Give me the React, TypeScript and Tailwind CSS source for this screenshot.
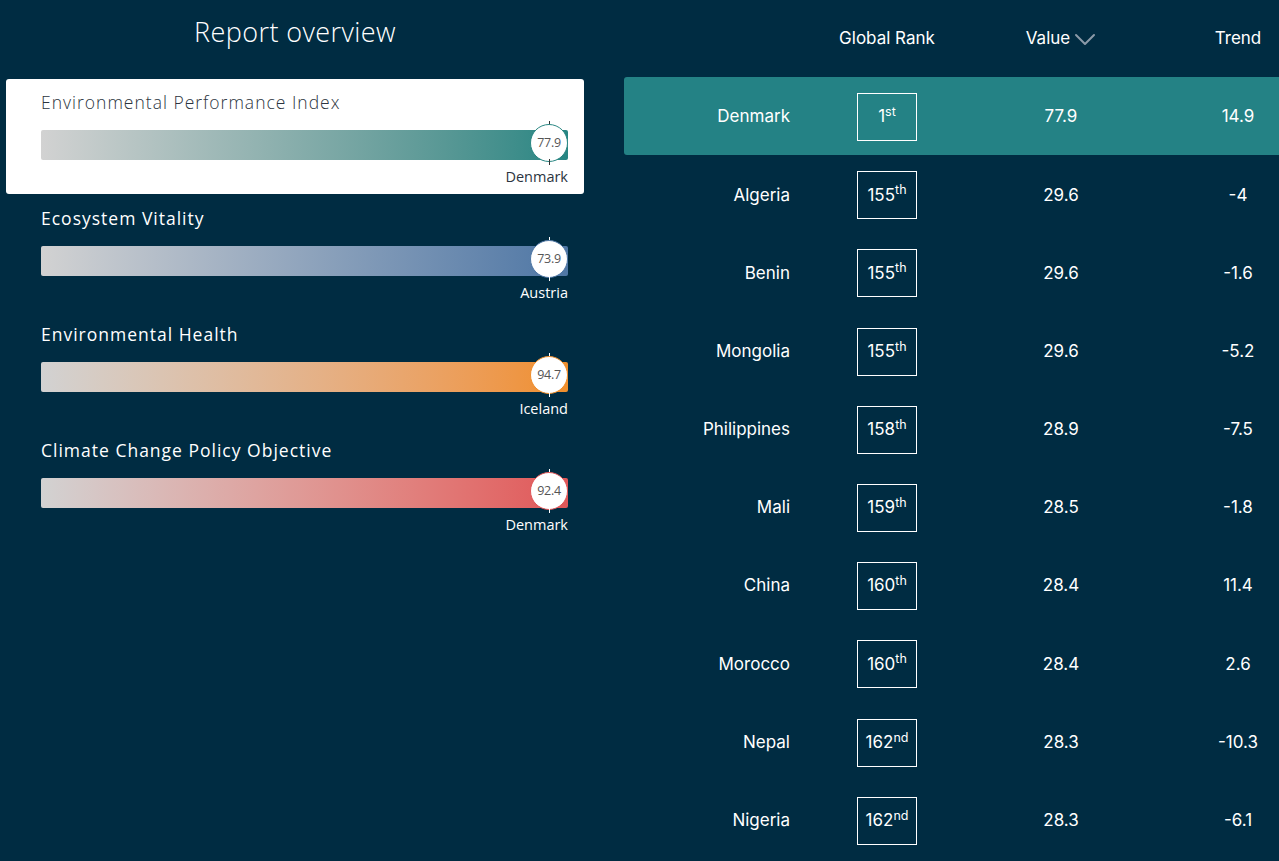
import React from 'react';

type Metric = {
  label: string;
  value: string;
  country: string;
  gradient: string;
  ring: string;
};

const metrics: Metric[] = [
  {
    label: 'Environmental Performance Index',
    value: '77.9',
    country: 'Denmark',
    gradient: 'bg-gradient-to-r from-[#d2d2d2] to-[#268683]',
    ring: 'border-[#2a8783]',
  },
  {
    label: 'Ecosystem Vitality',
    value: '73.9',
    country: 'Austria',
    gradient: 'bg-gradient-to-r from-[#d2d2d2] to-[#4f77a5]',
    ring: 'border-[#4f77a5]',
  },
  {
    label: 'Environmental Health',
    value: '94.7',
    country: 'Iceland',
    gradient: 'bg-gradient-to-r from-[#d2d2d2] to-[#f08f2c]',
    ring: 'border-[#f08f2c]',
  },
  {
    label: 'Climate Change Policy Objective',
    value: '92.4',
    country: 'Denmark',
    gradient: 'bg-gradient-to-r from-[#d2d2d2] to-[#e05759]',
    ring: 'border-[#e05759]',
  },
];

const rows = [
  { country: 'Denmark', rank: '1', suffix: 'st', value: '77.9', trend: '14.9' },
  { country: 'Algeria', rank: '155', suffix: 'th', value: '29.6', trend: '-4' },
  { country: 'Benin', rank: '155', suffix: 'th', value: '29.6', trend: '-1.6' },
  { country: 'Mongolia', rank: '155', suffix: 'th', value: '29.6', trend: '-5.2' },
  { country: 'Philippines', rank: '158', suffix: 'th', value: '28.9', trend: '-7.5' },
  { country: 'Mali', rank: '159', suffix: 'th', value: '28.5', trend: '-1.8' },
  { country: 'China', rank: '160', suffix: 'th', value: '28.4', trend: '11.4' },
  { country: 'Morocco', rank: '160', suffix: 'th', value: '28.4', trend: '2.6' },
  { country: 'Nepal', rank: '162', suffix: 'nd', value: '28.3', trend: '-10.3' },
  { country: 'Nigeria', rank: '162', suffix: 'nd', value: '28.3', trend: '-6.1' },
];

const MetricBlock: React.FC<{ m: Metric; active: boolean }> = ({ m, active }) => {
  return (
    <div
      className={`pt-[11px] pl-[35px] pr-[16px] ${
        active ? 'bg-white rounded-[3px] h-[115px] mb-[1px]' : 'h-[116px]'
      }`}
    >
      <p
        className={`text-[17.5px] leading-[24px] tracking-[1px] ${
          active ? 'text-[#2b3440] font-light' : 'text-white'
        }`}
      >
        {m.label}
      </p>
      <div className="relative mt-[16px] h-[30px]">
        <div className={`h-full rounded-[2px] ${m.gradient}`} />
        <div className="absolute right-0 top-[-9px] flex flex-col items-center w-[38px]">
          <div className={`w-px h-[6px] ${active ? 'bg-[#333]' : 'bg-white'}`} />
          <div
            className={`w-[38px] h-[38px] -my-[3px] rounded-full bg-white border-[1.5px] ${m.ring} flex items-center justify-center text-[12.5px] text-[#555] tracking-[-0.3px]`}
          >
            {m.value}
          </div>
          <div className={`w-px h-[6px] ${active ? 'bg-[#333]' : 'bg-white'}`} />
        </div>
      </div>
      <p
        className={`mt-[8px] text-right text-[14.5px] leading-[18px] ${
          active ? 'text-[#2b3440]' : 'text-white'
        }`}
      >
        {m.country}
      </p>
    </div>
  );
};

const App: React.FC = () => {
  return (
    <div
      className="w-[1279px] h-[861px] bg-[#002c42] flex overflow-hidden"
      style={{ fontFamily: '"Open Sans", sans-serif' }}
    >
      <div className="w-[590px] pl-[6px] shrink-0">
        <div className="h-[79px] w-[578px] flex items-center justify-center pb-[14px]">
          <h1 className="text-[27px] font-light text-white tracking-[0.4px]">Report overview</h1>
        </div>
        <div className="w-[578px]">
          {metrics.map((m, i) => (
            <MetricBlock key={m.label} m={m} active={i === 0} />
          ))}
        </div>
      </div>

      <div
        className="ml-[34px] flex-1 text-white text-[17px]"
        style={{ fontFamily: 'Inter, sans-serif' }}
      >
        <div className="h-[77px] flex items-center">
          <div className="w-[166px]" />
          <div className="w-[194px] text-center">Global Rank</div>
          <div className="w-[154px] flex items-center justify-center gap-[4px]">
            <span>Value</span>
            <svg width="22" height="14" viewBox="0 0 22 14" fill="none">
              <polyline
                points="2,3 11,12 20,3"
                stroke="#8b9aa8"
                strokeWidth="2"
                strokeLinecap="round"
                strokeLinejoin="round"
              />
            </svg>
          </div>
          <div className="w-[40px]" />
          <div className="w-[120px] text-center">Trend</div>
        </div>
        {rows.map((r, i) => (
          <div
            key={r.country}
            className={`h-[78.2px] pt-[2px] flex items-center ${i === 0 ? 'bg-[#248285] rounded-l-[3px]' : ''}`}
          >
            <div className="w-[166px] text-right">{r.country}</div>
            <div className="w-[194px] flex justify-center">
              <div className="w-[60px] h-[48px] border border-white flex items-center justify-center">
                <span>
                  {r.rank}
                  <sup className="text-[12.5px]">{r.suffix}</sup>
                </span>
              </div>
            </div>
            <div className="w-[154px] text-center">{r.value}</div>
            <div className="w-[40px]" />
            <div className="w-[120px] text-center">{r.trend}</div>
          </div>
        ))}
      </div>
    </div>
  );
};

export default App;
